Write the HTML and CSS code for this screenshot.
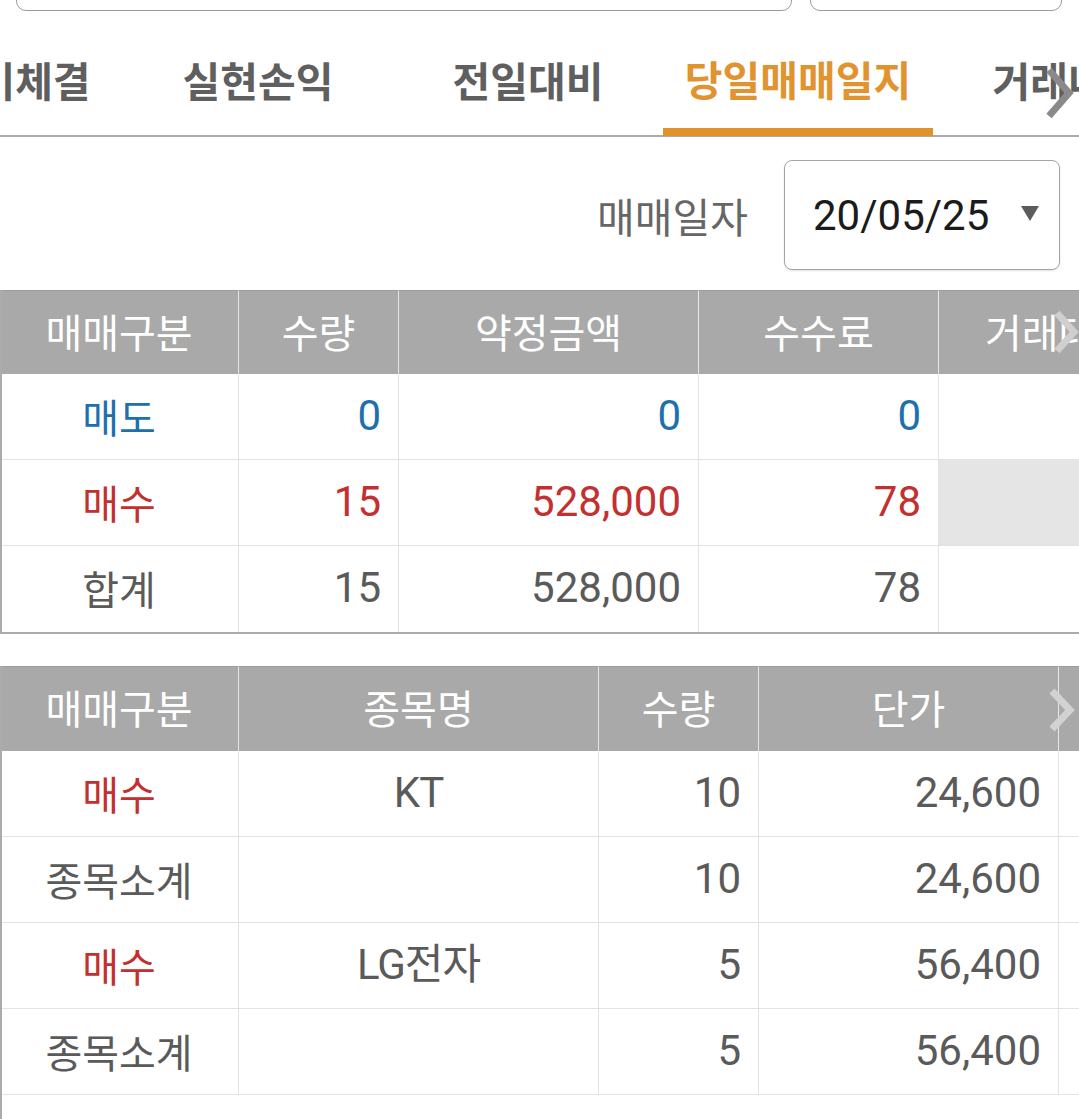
FILE: index.html
```html
<!DOCTYPE html>
<html lang="ko">
<head>
<meta charset="utf-8">
<title>당일매매일지</title>
<link rel="stylesheet" href="styles.css">
</head>
<body>
<div class="page">
  <div class="top-inputs">
    <div class="input-box wide"></div>
    <div class="input-box narrow"></div>
  </div>

  <div class="tabs">
    <div class="tab-strip">
      <div class="tab first">미체결</div>
      <div class="tab">실현손익</div>
      <div class="tab">전일대비</div>
      <div class="tab active">당일매매일지</div>
      <div class="tab">거래내역</div>
    </div>
    <svg class="chev tab-chev" width="30" height="52" viewBox="0 0 30 52"><polyline points="4,3 24,26 4,49" fill="none" stroke="#8a8a8a" stroke-width="7"/></svg>
  </div>

  <div class="date-row">
    <span class="date-label">매매일자</span>
    <div class="select">
      <span class="select-value">20/05/25</span>
      <span class="caret"></span>
    </div>
  </div>

  <div class="grid-wrap first-grid">
    <table class="grid g1">
      <colgroup><col class="c239"><col class="c160"><col class="c300"><col class="c240"><col class="c240"></colgroup>
      <thead>
        <tr><th>매매구분</th><th>수량</th><th>약정금액</th><th>수수료</th><th>거래대금</th></tr>
      </thead>
      <tbody>
        <tr><td class="kr sell">매도</td><td class="num sell">0</td><td class="num sell">0</td><td class="num sell">0</td><td></td></tr>
        <tr><td class="kr buy">매수</td><td class="num buy">15</td><td class="num buy">528,000</td><td class="num buy">78</td><td class="shade"></td></tr>
        <tr><td class="kr">합계</td><td class="num">15</td><td class="num">528,000</td><td class="num">78</td><td></td></tr>
      </tbody>
    </table>
    <svg class="chev head-chev1" width="26" height="44" viewBox="0 0 26 44"><polyline points="4,3 21,22 4,41" fill="none" stroke="#cfcfcf" stroke-width="7"/></svg>
  </div>

  <div class="grid-wrap second-grid">
    <table class="grid g2">
      <colgroup><col class="c239"><col class="c360"><col class="c160"><col class="c300"><col class="c240"></colgroup>
      <thead>
        <tr><th>매매구분</th><th>종목명</th><th>수량</th><th>단가</th><th>매매금액</th></tr>
      </thead>
      <tbody>
        <tr><td class="kr buy">매수</td><td class="name">KT</td><td class="num">10</td><td class="num">24,600</td><td></td></tr>
        <tr><td class="kr">종목소계</td><td class="name"></td><td class="num">10</td><td class="num">24,600</td><td></td></tr>
        <tr><td class="kr buy">매수</td><td class="name">LG전자</td><td class="num">5</td><td class="num">56,400</td><td></td></tr>
        <tr><td class="kr">종목소계</td><td class="name"></td><td class="num">5</td><td class="num">56,400</td><td></td></tr>
      </tbody>
    </table>
    <svg class="chev head-chev2" width="28" height="44" viewBox="0 0 28 44"><polyline points="4,3 22,22 4,41" fill="none" stroke="#d2d2d2" stroke-width="7"/></svg>
  </div>
</div>
</body>
</html>
```

FILE: styles.css
```css
* { box-sizing: border-box; }
html, body {
  margin: 0;
  padding: 0;
  background: #fff;
  overflow: hidden;
}
body {
  width: 1079px;
  height: 1119px;
  font-family: "Noto Sans CJK KR", "Noto Sans", sans-serif;
  color: #5a5a5a;
}
.page {
  width: 1079px;
  height: 1119px;
  overflow: hidden;
  display: flex;
  flex-direction: column;
}

/* top partially visible inputs */
.top-inputs {
  height: 11px;
  display: flex;
  align-items: flex-end;
  gap: 18px;
  padding: 0 17px 0 16px;
  overflow: hidden;
  flex: none;
}
.input-box {
  height: 60px;
  border: 1.5px solid #9a9a9a;
  border-radius: 10px;
  background: #fff;
}
.input-box.wide { width: 776px; }
.input-box.narrow { width: 252px; }

/* tabs */
.tabs {
  position: relative;
  height: 126px;
  overflow: hidden;
  flex: none;
}
.tab-strip {
  display: flex;
  height: 100%;
  margin-left: -55px;
  width: 1300px;
  box-shadow: inset 0 -2px 0 #ababab;
}
.tab {
  flex: none;
  width: 270px;
  height: 100%;
  display: flex;
  align-items: center;
  justify-content: center;
  padding-top: 10px;
  font-size: 41px;
  font-weight: 700;
  color: #5f5f5f;
  letter-spacing: 0;
}
.tab.first { width: 178px; }
.tab.active {
  color: #e0932f;
  border-bottom: 8px solid #e0922d;
  padding-top: 17px;
  height: calc(100% - 1px);
}
.chev { position: absolute; }
.tab-chev { right: 4px; top: 56px; }

/* date row */
.date-row {
  flex: none;
  display: flex;
  justify-content: flex-end;
  align-items: center;
  gap: 36px;
  padding: 23px 19px 20px 0;
}
.date-label {
  font-size: 41px;
  color: #666;
}
.select {
  width: 276px;
  height: 110px;
  border: 1px solid #a3a3a3;
  border-radius: 8px;
  box-shadow: 0 1px 2px rgba(0,0,0,0.12);
  display: flex;
  align-items: center;
  justify-content: space-between;
  padding: 0 20px 0 28px;
}
.select-value {
  font-family: Roboto, "Liberation Sans", sans-serif;
  font-size: 42px;
  color: #1b1b1b;
}
.caret {
  width: 0;
  height: 0;
  border-left: 9px solid transparent;
  border-right: 9px solid transparent;
  border-top: 15px solid #5c5c5c;
  margin-bottom: 4px;
}

/* grids */
.grid-wrap {
  position: relative;
  flex: none;
  width: 1079px;
  overflow: hidden;
  border-left: 2px solid #ababab;
}
.first-grid { border-bottom: 2px solid #ababab; }
.second-grid {
  margin-top: 32px;
  flex: 1 1 auto;
}
.grid {
  border-collapse: separate;
  border-spacing: 0;
  table-layout: fixed;
  margin-left: -2px;
}
.g1 { width: 1179px; }
.g2 { width: 1299px; }
col.c239 { width: 239px; }
col.c160 { width: 160px; }
col.c240 { width: 240px; }
col.c300 { width: 300px; }
col.c360 { width: 360px; }

.grid th {
  height: 84px;
  background: #a9a9a9;
  color: #fff;
  font-weight: 400;
  font-size: 40px;
  line-height: 1;
  text-align: center;
  padding: 0 0 4px;
  border-top: 1px solid #9c9c9c;
  border-right: 1px solid #e6e6e6;
  white-space: nowrap;
  overflow: hidden;
}
.g2 th { height: 85px; }
.grid td {
  height: 86px;
  border-right: 1px solid #e3e3e3;
  border-bottom: 1px solid #e3e3e3;
  line-height: 1;
  white-space: nowrap;
  padding: 0 0 2px;
  color: #5a5a5a;
}
.g1 tbody tr:last-child td { border-bottom: none; }
.grid td.kr {
  font-size: 40px;
  text-align: center;
}
.grid td.num {
  font-family: Roboto, "Liberation Sans", sans-serif;
  font-size: 42px;
  text-align: right;
  padding-right: 17px;
}
.grid td.name {
  font-family: Roboto, "Noto Sans CJK KR", sans-serif;
  font-size: 42px;
  text-align: center;
  letter-spacing: -1px;
}
.grid td.sell { color: #1e6fae; }
.grid td.buy { color: #c3302f; }
.grid td.shade { background: #e5e5e5; }

.head-chev1 { left: 1051px; top: 20px; }
.head-chev2 { left: 1046px; top: 22px; }
```
